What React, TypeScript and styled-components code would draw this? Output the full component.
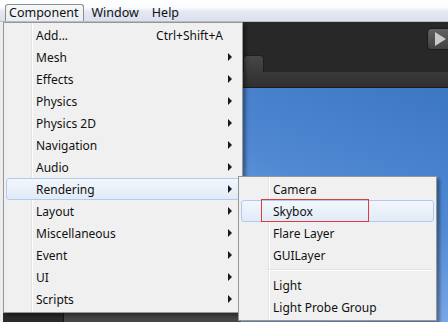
import React from 'react'
import styled, { createGlobalStyle } from 'styled-components'

const GlobalStyle = createGlobalStyle`
  html, body {
    margin: 0;
    padding: 0;
    background: #f0f0f0;
  }
  body {
    font-family: "Noto Sans", "Liberation Sans", sans-serif;
    font-size: 12px;
    color: #111;
  }
`

const Page = styled.div`
  position: relative;
  width: 448px;
  height: 322px;
  overflow: hidden;
  display: flex;
  flex-direction: column;
`

const MenuBar = styled.div`
  height: 21px;
  display: flex;
  align-items: flex-end;
  padding: 0 0 0 5px;
  background: linear-gradient(to bottom, #ffffff 0%, #fbfcfe 35%, #e3e8f3 55%, #dae0ee 100%);
  border-bottom: 1px solid #b9bcc4;
`

const BarItem = styled.div<{ $open?: boolean }>`
  height: 17px;
  line-height: 16px;
  padding: 0 5px 0 3px;
  margin-right: 3px;
  box-sizing: border-box;
  border: 1px solid ${p => (p.$open ? '#8d8d8d' : 'transparent')};
  border-bottom: none;
  border-radius: 3px 3px 0 0;
  background: ${p => (p.$open ? 'linear-gradient(#f6f7f9, #e9ecf1)' : 'transparent')};
  font-size: 12.5px;
  color: #111;
`

const Editor = styled.div`
  flex: 1;
  display: grid;
  grid-template-rows: 33px 17px 16px 1fr;
  background: #282828;
  border-left: 3px solid #ececec;
`

const TopStrip = styled.div`
  display: flex;
  justify-content: flex-end;
  align-items: flex-start;
  padding-top: 6px;
`

const PlayButton = styled.div`
  width: 24px;
  height: 20px;
  margin-right: -5px;
  border-radius: 4px;
  border: 1px solid #1c1c1c;
  background: linear-gradient(#616161, #424242);
  display: flex;
  align-items: center;
  justify-content: center;
`

const TabRow = styled.div`
  display: flex;
  align-items: flex-end;
  padding-left: 240px;
`

const Tab = styled.div`
  width: 21px;
  height: 17px;
  border-radius: 4px 4px 0 0;
  background: linear-gradient(#474747, #3a3a3a);
  border: 1px solid #1f1f1f;
  border-bottom: none;
  box-sizing: border-box;
`

const Toolbar = styled.div`
  background: linear-gradient(#3a3a3a, #2f2f2f);
  border-bottom: 1px solid #1b1b1b;
`

const Panes = styled.div`
  display: grid;
  grid-template-columns: 61px 177px 1fr;
`

const Hierarchy = styled.div`
  background: #2a2a2a;
  border-right: 1px solid #1a1a1a;
`

const Inspector = styled.div`
  background: #464646;
`

const Scene = styled.div`
  background: linear-gradient(200deg, #3c77c4 0%, #5189d2 45%, #7eaaeb 80%, #98baee 100%);
`

const Menu = styled.div<{ $left: number; $top: number; $width: number; $gutter: number }>`
  position: absolute;
  left: ${p => p.$left}px;
  top: ${p => p.$top}px;
  width: ${p => p.$width}px;
  box-sizing: border-box;
  padding: 1px 0 2px;
  background: #f0f0f0;
  border: 1px solid #979797;
  box-shadow: 3px 3px 3px rgba(0, 0, 0, 0.35);
  background-image: linear-gradient(to right, transparent ${p => p.$gutter}px, #e2e3e3 ${p => p.$gutter}px, #e2e3e3 ${p => p.$gutter + 1}px, #ffffff ${p => p.$gutter + 1}px, #ffffff ${p => p.$gutter + 2}px, transparent ${p => p.$gutter + 2}px);
`

const Item = styled.div<{ $indent: number; $active?: boolean }>`
  position: relative;
  height: 22px;
  margin: 0 2px;
  box-sizing: border-box;
  display: flex;
  align-items: center;
  padding-left: ${p => p.$indent}px;
  padding-right: 7px;
  border: 1px solid ${p => (p.$active ? '#aeccf1' : 'transparent')};
  border-radius: 3px;
  background: ${p => (p.$active ? 'linear-gradient(#f3f7fc, #e1eaf7)' : 'transparent')};
  color: #111;
  white-space: nowrap;
`

const Label = styled.span`
  flex: 1;
`

const Shortcut = styled.span`
  margin-right: 9px;
`

const Arrow = styled.span`
  width: 0;
  height: 0;
  border-top: 4px solid transparent;
  border-bottom: 4px solid transparent;
  border-left: 4px solid #1a1a1a;
`

const Separator = styled.div<{ $gutter: number }>`
  height: 8px;
  margin-left: ${p => p.$gutter}px;
  margin-right: 3px;
  display: flex;
  align-items: center;
  &::after {
    content: '';
    flex: 1;
    height: 1px;
    background: #e0e0e0;
    border-bottom: 1px solid #ffffff;
  }
`

const Callout = styled.div`
  position: absolute;
  left: 19px;
  top: -2px;
  width: 108px;
  height: 23px;
  box-sizing: border-box;
  border: 1px solid #e03a3a;
`

const mainItems = [
  'Mesh',
  'Effects',
  'Physics',
  'Physics 2D',
  'Navigation',
  'Audio',
  'Rendering',
  'Layout',
  'Miscellaneous',
  'Event',
  'UI',
  'Scripts',
]

export default function App() {
  return (
    <Page>
      <GlobalStyle />
      <MenuBar>
        <BarItem $open>Component</BarItem>
        <BarItem>Window</BarItem>
        <BarItem>Help</BarItem>
      </MenuBar>
      <Editor>
        <TopStrip>
          <PlayButton>
            <svg width="12" height="14" viewBox="0 0 12 14">
              <path d="M1 0 L12 7 L1 14 Z" fill="#c9c9c9" />
            </svg>
          </PlayButton>
        </TopStrip>
        <TabRow>
          <Tab />
        </TabRow>
        <Toolbar />
        <Panes>
          <Hierarchy />
          <Inspector />
          <Scene />
        </Panes>
      </Editor>

      <Menu $left={3} $top={22} $width={240} $gutter={27}>
        <Item $indent={29}>
          <Label>Add...</Label>
          <Shortcut>Ctrl+Shift+A</Shortcut>
        </Item>
        {mainItems.map(name => (
          <Item key={name} $indent={29} $active={name === 'Rendering'}>
            <Label>{name}</Label>
            <Arrow />
          </Item>
        ))}
      </Menu>

      <Menu $left={238} $top={176} $width={199} $gutter={29}>
        <Item $indent={31}>
          <Label>Camera</Label>
        </Item>
        <Item $indent={31} $active>
          <Label>Skybox</Label>
          <Callout />
        </Item>
        <Item $indent={31}>
          <Label>Flare Layer</Label>
        </Item>
        <Item $indent={31}>
          <Label>GUILayer</Label>
        </Item>
        <Separator $gutter={30} />
        <Item $indent={31}>
          <Label>Light</Label>
        </Item>
        <Item $indent={31}>
          <Label>Light Probe Group</Label>
        </Item>
      </Menu>
    </Page>
  )
}
